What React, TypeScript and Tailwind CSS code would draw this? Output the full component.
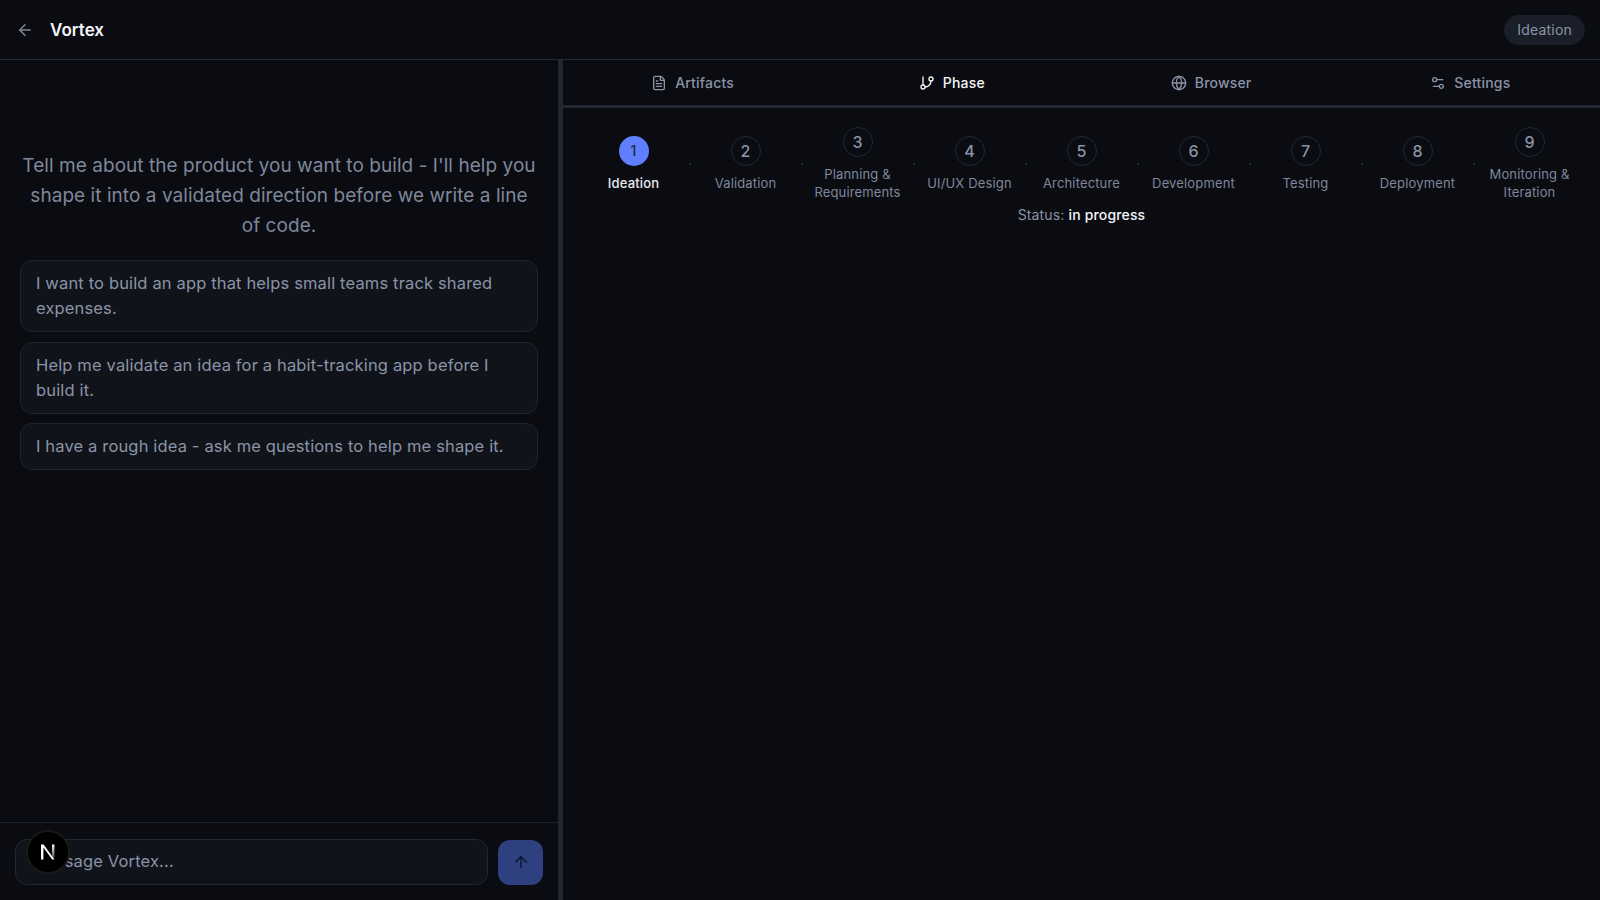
import { ArrowLeft, ArrowUp, FileText, GitBranch, Globe, Settings2 } from 'lucide-react';

const suggestions = [
    'I want to build an app that helps small teams track shared expenses.',
    'Help me validate an idea for a habit-tracking app before I build it.',
    'I have a rough idea - ask me questions to help me shape it.',
];

const tabs = [
    { label: 'Artifacts', icon: FileText },
    { label: 'Phase', icon: GitBranch, active: true },
    { label: 'Browser', icon: Globe },
    { label: 'Settings', icon: Settings2 },
];

const phases = [
    ['Ideation'],
    ['Validation'],
    ['Planning &', 'Requirements'],
    ['UI/UX Design'],
    ['Architecture'],
    ['Development'],
    ['Testing'],
    ['Deployment'],
    ['Monitoring &', 'Iteration'],
];

function NextLogo() {
    return (
        <svg viewBox="0 0 18 18" className="h-[18px] w-[18px]" fill="none">
            <defs>
                <linearGradient id="next-fade" x1="0" y1="0" x2="0" y2="1">
                    <stop offset="0" stopColor="#ffffff" />
                    <stop offset="1" stopColor="#ffffff" stopOpacity="0.3" />
                </linearGradient>
            </defs>
            <path d="M2 1.5H4.6L15.5 16.5H13.2L4.4 4.6V16.5H2Z" fill="#ffffff" />
            <rect x="13" y="1.5" width="2.4" height="13" fill="url(#next-fade)" />
        </svg>
    );
}

function PhaseStep({ index, lines }: { index: number; lines: string[] }) {
    const active = index === 0;
    return (
        <div className="flex w-[104px] shrink-0 flex-col items-center">
            {active ? (
                <div className="flex h-[30px] w-[30px] items-center justify-center rounded-full bg-[#5f7fff] text-sm font-medium text-[#1e293b]">
                    {index + 1}
                </div>
            ) : (
                <div className="flex h-[30px] w-[30px] items-center justify-center rounded-full border border-[#232733] text-base font-medium text-[#8b93a7]">
                    {index + 1}
                </div>
            )}
            <div className={`mt-[9px] text-center text-[13px] leading-[17.5px] tracking-[0.15px] ${active ? 'font-medium text-[#e8eaf0]' : 'text-[#7f879b]'}`}>
                {lines.map((line) => (
                    <div key={line} className="whitespace-nowrap">{line}</div>
                ))}
            </div>
        </div>
    );
}

export default function App() {
    return (
        <div className="flex h-[900px] w-[1600px] flex-col overflow-hidden bg-[#0a0c12] font-['Inter',sans-serif] text-[#8b93a7]">

            {/* Top bar */}
            <header className="flex h-[60px] shrink-0 items-center justify-between border-b border-[#232733] pl-4 pr-[15px]">
                <div className="flex items-center gap-4">
                    <ArrowLeft className="h-[18px] w-[18px] text-[#7f879b]" />
                    <span className="text-[17px] leading-[26px] font-semibold text-[#f4f5f8]">Vortex</span>
                </div>
                <span className="flex h-[30px] items-center rounded-full bg-[#1a1e28] px-[13px] text-sm tracking-[0.2px] text-[#8b93a7]">Ideation</span>
            </header>

            <div className="flex min-h-0 flex-1">

                {/* Chat column */}
                <div className="flex w-[558px] shrink-0 flex-col">
                    <div className="flex flex-1 flex-col px-5 pt-[91px]">
                        <p className="text-center text-[19px] leading-[30px] tracking-[0.05px] text-[#7f879b]">
                            Tell me about the product you want to build - I'll help you shape it into a validated direction before we write a line of code.
                        </p>
                        <div className="mt-[19px] flex flex-col gap-[9.5px]">
                            {suggestions.map((text) => (
                                <div key={text} className="rounded-xl border border-[#1f232e] bg-[#10131a] px-[15px] py-[10px] text-[16.5px] leading-[25px] tracking-[0.15px] text-[#8b93a7]">
                                    {text}
                                </div>
                            ))}
                        </div>
                    </div>

                    {/* Composer */}
                    <div className="relative flex h-[78px] shrink-0 items-center gap-[10px] border-t border-[#1f232e] px-[15px]">
                        <div className="flex h-[46px] flex-1 items-center rounded-xl border border-[#232733] bg-[#10131a] px-[15px] text-[16.5px] tracking-[0.15px] text-[#8b93a7]">
                            Message Vortex...
                        </div>
                        <button className="mt-[1px] flex h-[45px] w-[45px] items-center justify-center rounded-xl bg-[#2f4080]">
                            <ArrowUp className="h-[18px] w-[18px] text-[#0f172a]" />
                        </button>
                        <div className="absolute left-[26px] top-[7px] flex h-[44px] w-[44px] items-center justify-center rounded-full border-2 border-[#1a1a1a] bg-black">
                            <NextLogo />
                        </div>
                    </div>
                </div>

                {/* Right panel */}
                <div className="flex min-w-0 flex-1 flex-col border-l-[5px] border-[#232733]">
                    <nav className="grid h-[48px] shrink-0 grid-cols-4 border-b-[3px] border-[#232733]">
                        {tabs.map(({ label, icon: Icon, active }) => (
                            <div key={label} className={`flex items-center justify-center gap-2 text-sm font-medium tracking-[0.2px] ${active ? 'text-[#f4f5f8]' : 'text-[#8b93a7]'}`}>
                                <Icon className="h-4 w-4" />
                                {label}
                            </div>
                        ))}
                    </nav>

                    <div className="flex items-center justify-center pt-[19px]">
                        {phases.map((lines, i) => (
                            <div key={lines[0]} className="flex items-center">
                                {i > 0 && <div className="mx-[3px] h-[2px] w-[2px] bg-[#232733]" />}
                                <PhaseStep index={i} lines={lines} />
                            </div>
                        ))}
                    </div>
                    <p className="mt-[4px] text-center text-sm tracking-[0.15px] text-[#8b93a7]">
                        Status: <span className="font-medium text-[#f4f5f8]">in progress</span>
                    </p>
                </div>
            </div>
        </div>
    );
}
